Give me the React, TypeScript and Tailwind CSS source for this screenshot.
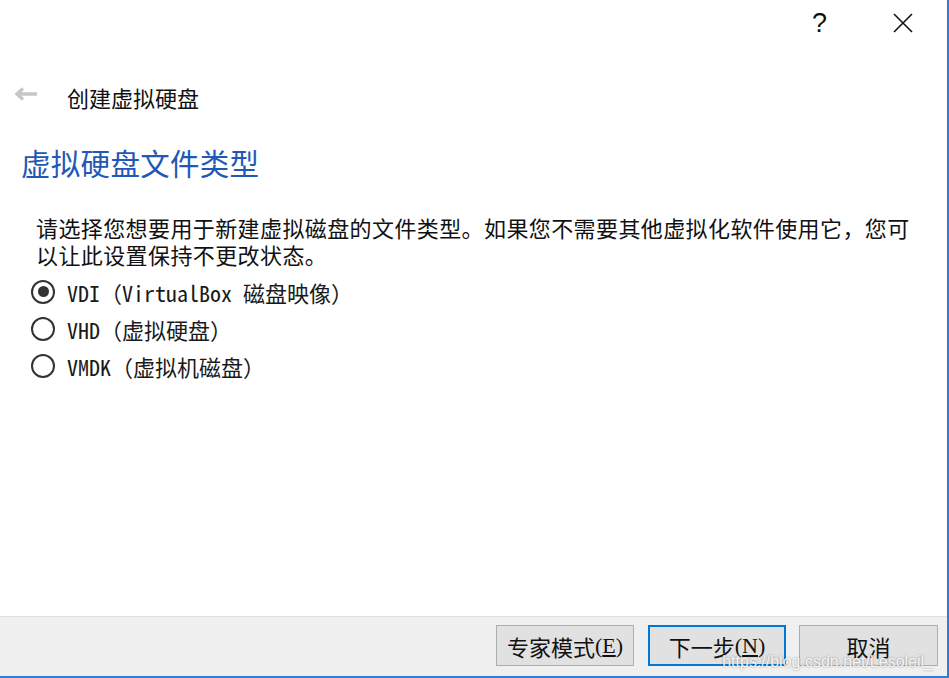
import React from "react";

const sans = "font-['Noto_Sans_CJK_SC','Noto_Sans',sans-serif]";
const mono = "font-['Noto_Sans_Mono_CJK_SC','Noto_Sans_CJK_SC',monospace]";

function Radio({ checked, label }: { checked?: boolean; label: string }) {
  return (
    <div className="flex h-[37px] items-center">
      <div className="flex h-[24px] w-[24px] items-center justify-center rounded-full border-2 border-[#333333] bg-white">
        {checked && <div className="h-[11px] w-[11px] rounded-full bg-[#333333]" />}
      </div>
      <span className={`ml-[12px] text-[22px] leading-none text-[#1a1a1a] ${mono}`}>{label}</span>
    </div>
  );
}

function Btn({ children, primary, w }: { children: React.ReactNode; primary?: boolean; w: string }) {
  return (
    <div
      className={`flex h-[41px] ${w} items-center justify-center bg-[#e1e1e1] text-[22px] leading-none text-[#111] ${sans} ${
        primary ? "border-2 border-[#0078d7]" : "border border-[#adadad]"
      }`}
    >
      {children}
    </div>
  );
}

export default function App() {
  return (
    <div className="relative flex h-[678px] w-[949px] flex-col overflow-hidden border-b-2 border-r-2 border-[#2b7fd4] bg-white">
      {/* title bar */}
      <div className="flex h-[46px] items-center justify-end">
        <span className="mr-[66px] font-['Liberation_Sans',sans-serif] text-[27px] leading-none text-[#111]">?</span>
        <svg width="20" height="20" viewBox="0 0 20 20" className="mr-[34px]">
          <path d="M1 1 L19 19 M19 1 L1 19" stroke="#111" strokeWidth="1.6" />
        </svg>
      </div>

      {/* back + title */}
      <div className="mt-[28px] flex h-[46px] items-center">
        <svg width="24" height="14" viewBox="0 0 24 14" className="ml-[14px] -mt-[6px]">
          <path d="M23 7 H4 M9 1.5 L3 7 L9 12.5" stroke="#c6c6c6" strokeWidth="3.4" fill="none" />
        </svg>
        <span className={`ml-[29px] text-[22px] leading-none text-[#111] ${sans}`}>创建虚拟硬盘</span>
      </div>

      {/* heading */}
      <div className={`ml-[21px] mt-[22px] h-[40px] text-[29.5px] tracking-[0.3px] leading-[40px] text-[#2158b8] ${sans}`}>
        虚拟硬盘文件类型
      </div>

      {/* paragraph */}
      <p className={`ml-[36px] mt-[32px] w-[885px] text-[22px] leading-[26.5px] tracking-[0.4px] text-[#111] ${sans}`}>
        请选择您想要用于新建虚拟磁盘的文件类型。如果您不需要其他虚拟化软件使用它，您可以让此设置保持不更改状态。
      </p>

      {/* radios */}
      <div className="ml-[31px] mt-[6px] flex flex-col">
        <Radio checked label="VDI（VirtualBox 磁盘映像）" />
        <Radio label="VHD（虚拟硬盘）" />
        <Radio label="VMDK（虚拟机磁盘）" />
      </div>

      {/* footer */}
      <div className="mt-auto flex h-[60px] items-start justify-end border-t border-[#dfdfdf] bg-[#f0f0f0] pr-[9px] pt-[8px]">
        <Btn w="w-[138px]">
          专家模式<span className="font-['Liberation_Serif',serif]">(<span className="underline">E</span>)</span>
        </Btn>
        <div className="ml-[14px]">
          <Btn primary w="w-[138px]">
            下一步<span className="font-['Liberation_Serif',serif]">(<span className="underline">N</span>)</span>
          </Btn>
        </div>
        <div className="ml-[13px]">
          <Btn w="w-[139px]">取消</Btn>
        </div>
      </div>

      {/* watermark */}
      <div className="absolute bottom-[6px] right-[14px] font-['Liberation_Sans',sans-serif] text-[16px] leading-none text-white/90 [text-shadow:0_0_2px_rgba(0,0,0,0.45)]">
        https://blog.csdn.net/Lesoleil_
      </div>
    </div>
  );
}
